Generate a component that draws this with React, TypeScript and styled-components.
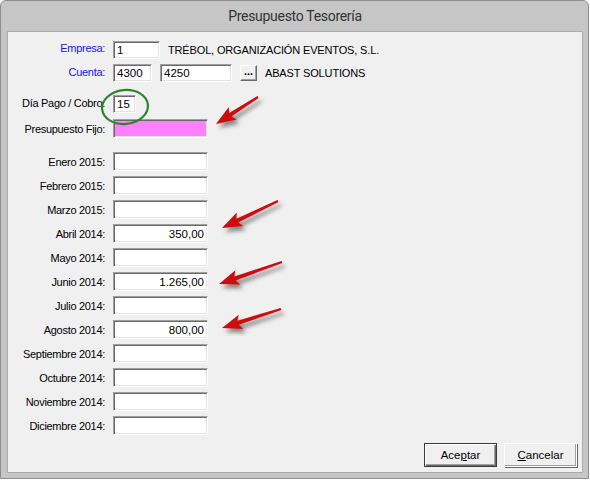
import styled, { createGlobalStyle } from "styled-components"

const GlobalStyle = createGlobalStyle`
  html, body {
    margin: 0;
    padding: 0;
    background: #ffffff;
  }
  * {
    box-sizing: border-box;
  }
`

const Window = styled.div`
  position: relative;
  width: 589px;
  height: 479px;
  display: flex;
  flex-direction: column;
  background: #c6c6c6;
  border: 1px solid #8e8e8e;
  border-radius: 6px 6px 0 0;
  padding: 0 5px 5px 6px;
  font-family: "Liberation Sans", Arial, sans-serif;
`

const TitleBar = styled.div`
  height: 30px;
  flex: none;
  display: flex;
  align-items: center;
  justify-content: center;
  font-family: Roboto, "Noto Sans", sans-serif;
  font-size: 14px;
  letter-spacing: -0.3px;
  color: #333333;
  padding-bottom: 1px;
`

const Client = styled.div`
  flex: 1;
  display: flex;
  flex-direction: column;
  background: #f0f0f0;
  border: 1px solid #acacac;
  padding: 9px 5px 5px 0;
`

const Form = styled.div`
  flex: 1;
  display: flex;
  flex-direction: column;
`

const Section = styled.div<{ $gap: number; $top?: number }>`
  display: flex;
  flex-direction: column;
  gap: ${(p) => p.$gap}px;
  margin-top: ${(p) => p.$top ?? 0}px;
`

const Row = styled.div`
  display: grid;
  grid-template-columns: 97px auto;
  column-gap: 8px;
  align-items: center;
`

const Label = styled.div<{ $blue?: boolean; $raise?: number }>`
  text-align: right;
  white-space: nowrap;
  font-size: 11px;
  letter-spacing: -0.3px;
  color: ${(p) => (p.$blue ? "#1414e6" : "#000000")};
  padding-bottom: ${(p) => p.$raise ?? 0}px;
`

const Fields = styled.div`
  display: flex;
  align-items: center;
  gap: 8px;
`

const Field = styled.input<{ $w: number; $h?: number; $bg?: string; $right?: boolean }>`
  width: ${(p) => p.$w}px;
  height: ${(p) => p.$h ?? 19}px;
  margin: 0;
  padding: 0 3px;
  font-family: "Liberation Sans", Arial, sans-serif;
  font-size: 11.5px;
  color: #000000;
  text-align: ${(p) => (p.$right ? "right" : "left")};
  background: ${(p) => p.$bg ?? "#ffffff"};
  border: 1px solid;
  border-color: #a0a0a0 #ffffff #ffffff #a0a0a0;
  box-shadow: inset 1px 1px 0 #696969, inset -1px -1px 0 #e3e3e3;
  outline: none;
`

const Caption = styled.span`
  font-size: 11px;
  letter-spacing: -0.15px;
  color: #000000;
  white-space: nowrap;
`

const Dots = styled.button`
  width: 17px;
  height: 16px;
  margin: 0;
  padding: 0 0 5px;
  font-family: "Liberation Sans", Arial, sans-serif;
  font-size: 11px;
  font-weight: bold;
  line-height: 1;
  background: #f0f0f0;
  border: 1px solid;
  border-color: #ffffff #696969 #696969 #ffffff;
  box-shadow: inset -1px -1px 0 #a0a0a0;
`

const Footer = styled.div`
  display: flex;
  justify-content: flex-end;
  gap: 7px;
`

const Button = styled.button<{ $default?: boolean }>`
  width: 73px;
  height: 24px;
  margin: 0;
  padding: 0;
  font-family: "Liberation Sans", Arial, sans-serif;
  font-size: 11.5px;
  color: #000000;
  background: #f0f0f0;
  border: 1px solid ${(p) => (p.$default ? "#3c3c3c" : "#ffffff")};
  box-shadow: ${(p) =>
    p.$default
      ? "inset 1px 1px 0 #ffffff, inset -1px -1px 0 #696969, inset -2px -2px 0 #a0a0a0"
      : "1px 1px 0 #696969, inset -1px -1px 0 #a0a0a0"};

  u {
    text-underline-offset: 1px;
  }
`

const Overlay = styled.svg`
  position: absolute;
  left: -1px;
  top: -1px;
  width: 589px;
  height: 479px;
  pointer-events: none;
`

type Pt = [number, number]

// barbed arrow polygon from tail to tip
function arrowPath(tail: Pt, tip: Pt) {
  const dx = tip[0] - tail[0]
  const dy = tip[1] - tail[1]
  const len = Math.hypot(dx, dy)
  const ux = dx / len
  const uy = dy / len
  const nx = -uy
  const ny = ux
  const head = 17
  const half = 7.5
  const neck: Pt = [tip[0] - ux * head, tip[1] - uy * head]
  const back: Pt = [neck[0] - ux * 3, neck[1] - uy * 3]
  const pts: Pt[] = [
    [tail[0] + nx * 1.2, tail[1] + ny * 1.2],
    [neck[0] + nx * 2.1, neck[1] + ny * 2.1],
    [back[0] + nx * half, back[1] + ny * half],
    tip,
    [back[0] - nx * half, back[1] - ny * half],
    [neck[0] - nx * 2.1, neck[1] - ny * 2.1],
    [tail[0] - nx * 1.2, tail[1] - ny * 1.2],
  ]
  return pts.map((p) => `${p[0].toFixed(1)},${p[1].toFixed(1)}`).join(" ")
}

const arrows: [Pt, Pt][] = [
  [[258, 97], [216, 124]],
  [[278, 201], [222, 228]],
  [[282, 262], [219, 284]],
  [[281, 309], [222, 328]],
]

const months: [string, string][] = [
  ["Enero 2015:", ""],
  ["Febrero 2015:", ""],
  ["Marzo 2015:", ""],
  ["Abril 2014:", "350,00"],
  ["Mayo 2014:", ""],
  ["Junio 2014:", "1.265,00"],
  ["Julio 2014:", ""],
  ["Agosto 2014:", "800,00"],
  ["Septiembre 2014:", ""],
  ["Octubre 2014:", ""],
  ["Noviembre 2014:", ""],
  ["Diciembre 2014:", ""],
]

export default function App() {
  return (
    <>
      <GlobalStyle />
      <Window>
        <TitleBar>Presupuesto Tesorería</TitleBar>
        <Client>
          <Form>
            <Section $gap={5}>
              <Row>
                <Label $blue $raise={5}>Empresa:</Label>
                <Fields>
                  <Field $w={47} $h={18} readOnly value="1" />
                  <Caption>TRÉBOL, ORGANIZACIÓN EVENTOS, S.L.</Caption>
                </Fields>
              </Row>
              <Row>
                <Label $blue $raise={3}>Cuenta:</Label>
                <Fields>
                  <Field $w={39} $h={18} readOnly value="4300" />
                  <Field $w={72} $h={18} readOnly value="4250" />
                  <Dots>...</Dots>
                  <Caption>ABAST SOLUTIONS</Caption>
                </Fields>
              </Row>
            </Section>
            <Section $gap={6} $top={13}>
              <Row>
                <Label $raise={2}>Día Pago / Cobro:</Label>
                <Fields>
                  <Field $w={23} $h={18} readOnly value="15" />
                </Fields>
              </Row>
              <Row>
                <Label>Presupuesto Fijo:</Label>
                <Fields>
                  <Field $w={95} $bg="#ff80ff" readOnly value="" />
                </Fields>
              </Row>
            </Section>
            <Section $gap={5} $top={14}>
              {months.map(([name, amount]) => (
                <Row key={name}>
                  <Label>{name}</Label>
                  <Fields>
                    <Field $w={95} $right readOnly value={amount} />
                  </Fields>
                </Row>
              ))}
            </Section>
          </Form>
          <Footer>
            <Button $default>
              Ace<u>p</u>tar
            </Button>
            <Button>
              <u>C</u>ancelar
            </Button>
          </Footer>
        </Client>
        <Overlay viewBox="0 0 589 479">
          <defs>
            <filter id="shade" x="-30%" y="-30%" width="160%" height="160%">
              <feDropShadow dx="3" dy="4" stdDeviation="2" floodColor="#000" floodOpacity="0.45" />
            </filter>
          </defs>
          <ellipse
            cx="125"
            cy="107"
            rx="23"
            ry="17"
            fill="none"
            stroke="#2a862a"
            strokeWidth="2.2"
            transform="rotate(-6 125 107)"
          />
          {arrows.map(([tail, tip], i) => (
            <polygon key={i} points={arrowPath(tail, tip)} fill="#cc0a0a" filter="url(#shade)" />
          ))}
        </Overlay>
      </Window>
    </>
  )
}
